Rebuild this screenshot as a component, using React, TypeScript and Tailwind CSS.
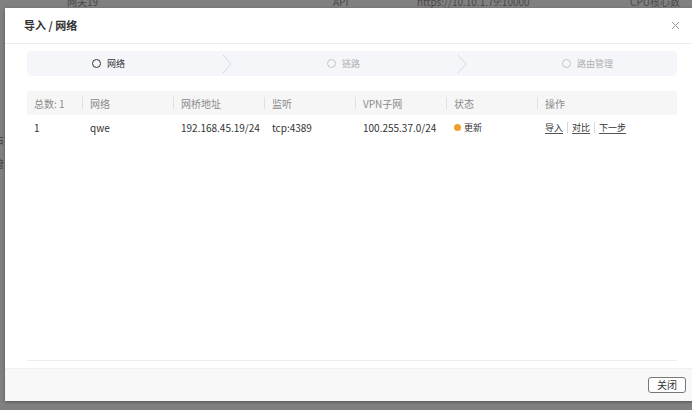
import React from "react";

const font = { fontFamily: '"Noto Sans CJK SC", "Noto Sans", sans-serif' };

function Chevron() {
  return (
    <svg width="10" height="20" viewBox="0 0 10 20" className="ml-auto mr-[30px]">
      <path d="M1 1 L9 10 L1 19" fill="none" stroke="#d4d7dc" strokeWidth="1" />
    </svg>
  );
}

function Step({ label, active, last }: { label: string; active?: boolean; last?: boolean }) {
  return (
    <div className={`flex items-center h-full pl-[65px] ${last ? "flex-1" : "w-[235px] shrink-0"}`}>
      <span
        className={`w-[9px] h-[9px] rounded-full border-[1.5px] ${active ? "border-[#333]" : "border-[#c4c4c4]"}`}
      />
      <span className={`ml-[6px] text-[9px] leading-none ${active ? "text-[#333]" : "text-[#b0b0b0]"}`}>{label}</span>
      {!last && <Chevron />}
    </div>
  );
}

const cols = [
  { h: "总数: 1", v: "1", w: "w-[56px]" },
  { h: "网络", v: "qwe", w: "w-[91px]" },
  { h: "网桥地址", v: "192.168.45.19/24", w: "w-[91px]" },
  { h: "监听", v: "tcp:4389", w: "w-[91px]" },
  { h: "VPN子网", v: "100.255.37.0/24", w: "w-[91px]" },
];

export default function App() {
  return (
    <div className="relative w-[692px] h-[410px] overflow-hidden bg-[#808080]" style={font}>
      {/* background page hints */}
      <div className="h-[8px] overflow-hidden">
        <div className="flex -mt-[4px] text-[10px] leading-[12px] text-[#4a4a4a] whitespace-nowrap">
          <span className="w-[67px] shrink-0" />
          <span className="w-[266px] shrink-0">网关19</span>
          <span className="w-[84px] shrink-0">API</span>
          <span className="w-[213px] shrink-0">https://10.10.1.79:10000</span>
          <span className="shrink-0">CPU核心数</span>
        </div>
      </div>
      <div className="absolute left-0 top-[135px] w-[5px] overflow-hidden text-[10px] leading-none text-[#3c3c3c]">
        <div className="-ml-[6px]">占</div>
        <div className="-ml-[6px] mt-[14px]">管</div>
      </div>

      {/* modal */}
      <div className="absolute left-[5px] top-[8px] w-[694px] h-[393px] bg-white flex flex-col shadow-[0_1px_3px_rgba(0,0,0,0.35)]">
        <div className="h-[36px] shrink-0 flex items-center justify-between px-[19px] border-b border-[#ececec]">
          <span className="text-[11px] font-bold text-[#333]">导入 / 网络</span>
          <svg width="9" height="9" viewBox="0 0 9 9">
            <path d="M1 1 L8 8 M8 1 L1 8" stroke="#999" strokeWidth="1" />
          </svg>
        </div>

        <div className="flex-1 flex flex-col px-[22px] pb-[7px]">
          <div className="flex-1 flex flex-col border-b border-[#ededed]">
            <div className="mt-[7px] h-[25px] rounded-[4px] bg-[#f4f6f9] flex items-center">
              <Step label="网络" active />
              <Step label="链路" />
              <Step label="路由管理" last />
            </div>

            <div className="mt-[15px]">
              <div className="flex h-[24px] bg-[#f6f6f6] text-[10px] text-[#8a8a8a] items-center">
                {cols.map((c) => (
                  <div key={c.h} className={`${c.w} shrink-0 flex items-center justify-between pl-[7px] h-full`}>
                    <span>{c.h}</span>
                    <span className="w-px h-[12px] bg-[#e0e0e0]" />
                  </div>
                ))}
                <div className="w-[91px] shrink-0 flex items-center justify-between pl-[7px] h-full">
                  <span>状态</span>
                  <span className="w-px h-[12px] bg-[#e0e0e0]" />
                </div>
                <div className="flex-1 pl-[7px]">操作</div>
              </div>
              <div className="flex h-[25px] text-[10px] text-[#333] items-center">
                {cols.map((c) => (
                  <div key={c.h} className={`${c.w} shrink-0 pl-[7px]`}>
                    {c.v}
                  </div>
                ))}
                <div className="w-[91px] shrink-0 pl-[7px] flex items-center">
                  <span className="w-[7px] h-[7px] rounded-full bg-[#eea02a]" />
                  <span className="ml-[3px] text-[9px]">更新</span>
                </div>
                <div className="flex-1 pl-[7px] flex items-center text-[9px]">
                  <span className="underline underline-offset-2 decoration-[#555]">导入</span>
                  <span className="mx-[4px] w-px h-[11px] bg-[#d8d8d8]" />
                  <span className="underline underline-offset-2 decoration-[#555]">对比</span>
                  <span className="mx-[4px] w-px h-[11px] bg-[#d8d8d8]" />
                  <span className="underline underline-offset-2 decoration-[#555]">下一步</span>
                </div>
              </div>
            </div>
          </div>
        </div>

        <div className="h-[33px] shrink-0 bg-[#f8f8f8] border-t border-[#f0f0f0] flex items-center justify-end pr-[13px]">
          <button className="w-[38px] h-[16px] rounded-[3px] border border-[#777] bg-white text-[10px] leading-none text-[#333] flex items-center justify-center">
            关闭
          </button>
        </div>
      </div>
    </div>
  );
}
